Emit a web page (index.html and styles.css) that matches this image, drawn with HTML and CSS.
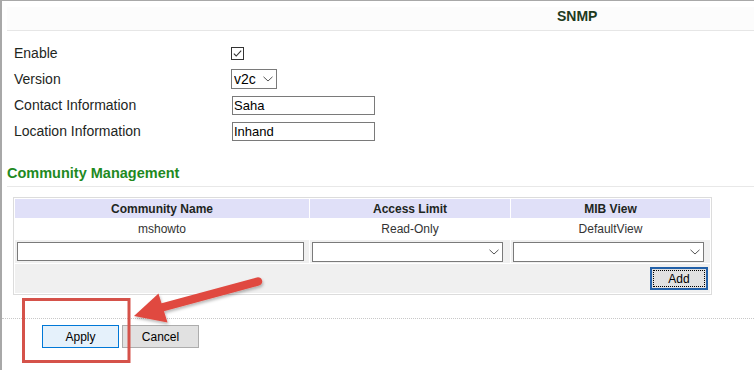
FILE: index.html
```html
<!DOCTYPE html>
<html>
<head>
<meta charset="utf-8">
<title>SNMP</title>
<link rel="stylesheet" href="styles.css">
</head>
<body>
<div class="page">
  <div class="titlebar"><span class="title">SNMP</span></div>

  <div class="form">
    <label class="lbl">Enable</label>
    <div class="ctl">
      <svg class="checkbox" width="13" height="13" viewBox="0 0 13 13">
        <rect x="0.5" y="0.5" width="12" height="12" fill="#fff" stroke="#333"/>
        <polyline points="2.8,6.6 5.2,9 10.2,3.6" fill="none" stroke="#333" stroke-width="1.1"/>
      </svg>
    </div>

    <label class="lbl">Version</label>
    <div class="ctl">
      <span class="sel-wrap">
        <select class="sel sel-version"><option>v2c</option></select>
        <svg class="chev" width="10" height="6" viewBox="0 0 10 6"><polyline points="0.5,0.8 5,5 9.5,0.8" fill="none" stroke="#555" stroke-width="1"/></svg>
      </span>
    </div>

    <label class="lbl">Contact Information</label>
    <div class="ctl"><input class="txt txt-form" type="text" value="Saha"></div>

    <label class="lbl">Location Information</label>
    <div class="ctl"><input class="txt txt-form" type="text" value="Inhand"></div>
  </div>

  <h2 class="section">Community Management</h2>

  <table class="grid">
    <colgroup><col class="c1"><col class="c2"><col class="c3"></colgroup>
    <tr class="head"><th>Community Name</th><th>Access Limit</th><th>MIB View</th></tr>
    <tr class="data"><td>mshowto</td><td>Read-Only</td><td>DefaultView</td></tr>
    <tr class="inputs">
      <td><input class="txt txt-grid" type="text"></td>
      <td>
        <span class="sel-wrap">
          <select class="sel sel-grid"><option></option></select>
          <svg class="chev" width="10" height="6" viewBox="0 0 10 6"><polyline points="0.5,0.8 5,5 9.5,0.8" fill="none" stroke="#555" stroke-width="1"/></svg>
        </span>
      </td>
      <td>
        <span class="sel-wrap">
          <select class="sel sel-grid"><option></option></select>
          <svg class="chev" width="10" height="6" viewBox="0 0 10 6"><polyline points="0.5,0.8 5,5 9.5,0.8" fill="none" stroke="#555" stroke-width="1"/></svg>
        </span>
      </td>
    </tr>
    <tr class="addrow"><td colspan="3"><button class="btn-add">Add</button></td></tr>
  </table>

  <div class="actions">
    <button class="btn btn-apply">Apply</button>
    <button class="btn btn-cancel">Cancel</button>
  </div>
</div>

<svg class="annot" width="754" height="370" viewBox="0 0 754 370">
  <defs>
    <filter id="sh" x="-20%" y="-20%" width="140%" height="140%">
      <feDropShadow dx="1" dy="2" stdDeviation="1.5" flood-color="#000" flood-opacity="0.28"/>
    </filter>
  </defs>
  <rect x="23.5" y="299.5" width="105.5" height="62" fill="none" stroke="#d5524a" stroke-width="3"/>
  <g filter="url(#sh)" fill="#e04a40">
    <line x1="160" y1="308" x2="258" y2="281.5" stroke="#e04a40" stroke-width="8.5" stroke-linecap="round"/>
    <polygon points="134,316 158.5,293.5 167.5,322.5"/>
  </g>
</svg>
</body>
</html>
```

FILE: styles.css
```css
html, body {
  margin: 0;
  padding: 0;
  background: #fff;
}

body {
  position: relative;
  width: 754px;
  height: 370px;
  overflow: hidden;
  font-family: "Liberation Sans", Arial, sans-serif;
  color: #222;
}

.page {
  box-sizing: border-box;
  width: 754px;
  height: 370px;
  border-top: 1px solid #a8a8a8;
  border-left: 2px solid #a8a8a8;
}

.titlebar {
  margin: 6px 0 0 5px;
  height: 23px;
  background: #fcfcfc;
  border-bottom: 1px solid #e6e6e6;
  padding-left: 550px;
}

.title {
  display: block;
  font-size: 14px;
  font-weight: bold;
  line-height: 18px;
  color: #1e3a1e;
}

.form {
  margin-top: 9px;
  padding-left: 12px;
  display: grid;
  grid-template-columns: 217px 1fr;
  grid-auto-rows: 26px;
  align-items: center;
}

.lbl {
  font-size: 14px;
  color: #1e261e;
}

.ctl {
  display: flex;
  align-items: center;
}

.checkbox {
  display: block;
}

.sel-wrap {
  position: relative;
  display: inline-block;
  line-height: 0;
}

.sel {
  -webkit-appearance: none;
  appearance: none;
  box-sizing: border-box;
  margin: 0;
  border: 1px solid #7a7a7a;
  border-radius: 0;
  background: #fff;
  color: #000;
  font-family: "Liberation Sans", Arial, sans-serif;
  outline: none;
}

.sel-version {
  width: 46px;
  height: 20px;
  font-size: 14px;
  padding: 0 0 0 2px;
}

.sel-grid {
  width: 191px;
  height: 20px;
  font-size: 12px;
  padding: 0 0 0 2px;
}

.chev {
  position: absolute;
  right: 4px;
  top: 7px;
  pointer-events: none;
}

.txt {
  box-sizing: border-box;
  margin: 0;
  border: 1px solid #7a7a7a;
  border-radius: 0;
  background: #fff;
  color: #000;
  font-family: "Liberation Sans", Arial, sans-serif;
  outline: none;
}

.txt-form {
  margin-left: 1px;
  width: 143px;
  height: 19px;
  font-size: 13px;
  padding: 0 1px;
}

.txt-grid {
  width: 287px;
  height: 19px;
  font-size: 12px;
  padding: 0 2px;
}

.section {
  margin: 16px 0 0 5px;
  height: 26px;
  line-height: 26px;
  font-size: 14.5px;
  font-weight: bold;
  color: #1f8a1f;
  border-bottom: 1px solid #e8e8e8;
}

.grid {
  margin: 10px 0 0 11px;
  width: 699px;
  table-layout: fixed;
  border: 1px solid #dcdcdc;
  border-collapse: separate;
  border-spacing: 1px;
  font-size: 12px;
}

.grid .c1 { width: 294px; }
.grid .c2 { width: 200px; }
.grid .c3 { width: 199px; }

.grid th,
.grid td {
  padding: 0 2px;
  text-align: center;
  vertical-align: middle;
}

.head th {
  height: 19px;
  background: #e0e0f8;
  font-weight: bold;
  color: #1e261e;
}

.data td {
  height: 20px;
  color: #333;
}

.inputs td {
  height: 23px;
  background: #f0f0f0;
  text-align: left;
  line-height: 0;
}

.addrow td {
  height: 29px;
  background: #f0f0f0;
  text-align: right;
  line-height: 0;
}

.btn-add {
  box-sizing: border-box;
  width: 58px;
  height: 23px;
  margin: 0;
  padding: 0;
  background: #e1e1e1;
  border: 2px solid #2260a8;
  outline: 1px dotted #000;
  outline-offset: -4px;
  font-family: "Liberation Sans", Arial, sans-serif;
  font-size: 12px;
  color: #000;
}

.actions {
  margin-top: 23px;
  border-top: 1px dotted #c8c8c8;
  padding: 6px 0 0 40px;
  display: flex;
  gap: 3px;
}

.btn {
  box-sizing: border-box;
  width: 77px;
  height: 23px;
  margin: 0;
  padding: 0;
  font-family: "Liberation Sans", Arial, sans-serif;
  font-size: 12px;
  color: #000;
}

.btn-apply {
  background: #e5f1fb;
  border: 1px solid #0078d7;
}

.btn-cancel {
  background: #e1e1e1;
  border: 1px solid #adadad;
}

.annot {
  position: absolute;
  top: 0;
  left: 0;
  pointer-events: none;
}
```
